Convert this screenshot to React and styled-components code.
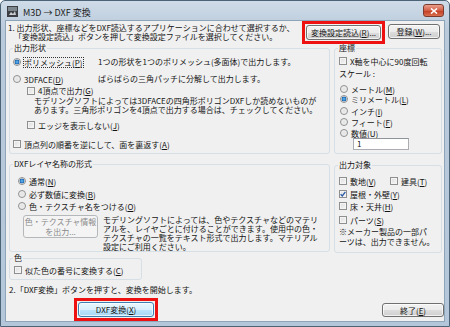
import styled, { createGlobalStyle } from 'styled-components';

const GlobalStyle = createGlobalStyle`
  html, body {
    margin: 0;
    padding: 0;
    background: #ffffff;
  }
  body {
    font-family: 'Noto Sans CJK JP', 'Noto Sans', sans-serif;
    font-size: 8px;
    color: #141414;
  }
`;

const Window = styled.div`
  width: 450px;
  height: 327px;
  box-sizing: border-box;
  display: flex;
  flex-direction: column;
  background: linear-gradient(#cfdbe8, #b9cadb 30px, #b4c7da);
  border: 1px solid #4d6477;
  border-radius: 5px 5px 0 0;
  padding: 0 4px 4px 4px;
`;

const TitleBar = styled.div`
  height: 19px;
  display: flex;
  align-items: flex-start;
  gap: 5px;
  padding-left: 2px;
`;

const TitleText = styled.span`
  flex: 1;
  font-size: 9px;
  line-height: 10px;
  margin-top: 7px;
  color: #1c1c1c;
`;

const CloseButton = styled.div`
  width: 19px;
  height: 11px;
  margin-top: 3px;
  margin-right: 1px;
  border: 1px solid #7d3a2e;
  border-radius: 3px;
  background: linear-gradient(#eaa08e, #d25d45 50%, #c03a22 51%, #d9704f);
  display: flex;
  align-items: center;
  justify-content: center;
`;

const Client = styled.div`
  flex: 1;
  background: #f0f0f0;
  border: 1px solid #8ea4b8;
  display: flex;
  flex-direction: column;
  padding: 0 4px 0 2px;
`;

const Header = styled.div`
  display: flex;
  align-items: flex-start;
  height: 22px;
`;

const Intro = styled.div`
  flex: 1;
  line-height: 9px;
  padding: 2px 0 0 0;
  white-space: nowrap;
`;

const Indent = styled.span`
  padding-left: ${(p) => p.$w}px;
`;

const RedFrame = styled.div`
  border: 3px solid #ee1111;
  padding: 1px 1px;
  margin-left: ${(p) => p.$ml || 0}px;
  margin-top: ${(p) => p.$mt || 0}px;
  display: flex;
`;

const Button = styled.div`
  box-sizing: border-box;
  width: ${(p) => p.$w}px;
  height: ${(p) => p.$h || 15}px;
  margin-left: ${(p) => p.$ml || 0}px;
  margin-top: ${(p) => p.$mt || 0}px;
  border: 1px solid ${(p) => (p.$primary ? '#3c7fb1' : p.$disabled ? '#b5b8ba' : '#707070')};
  border-radius: 3px;
  background: ${(p) =>
    p.$primary
      ? 'linear-gradient(#eaf6fd, #d9f0fc 50%, #bee6fd 51%, #a7d9f5)'
      : p.$disabled
      ? '#f4f4f4'
      : 'linear-gradient(#f2f2f2, #ebebeb 50%, #dddddd 51%, #cfcfcf)'};
  box-shadow: inset 0 0 0 1px ${(p) => (p.$disabled ? 'transparent' : 'rgba(255,255,255,0.7)')};
  color: ${(p) => (p.$disabled ? '#8a8a8a' : '#141414')};
  display: flex;
  align-items: center;
  justify-content: center;
  text-align: center;
  line-height: ${(p) => (p.$disabled ? 10 : 9)}px;
  white-space: nowrap;
  flex-shrink: 0;
`;

const Main = styled.div`
  display: grid;
  grid-template-columns: 321px 108px;
  column-gap: 4px;
  padding-left: 1px;
`;

const Column = styled.div`
  display: flex;
  flex-direction: column;
  align-items: flex-start;
`;

const Group = styled.fieldset`
  box-sizing: border-box;
  margin: ${(p) => p.$mt || 0}px 0 0 0;
  width: ${(p) => p.$w}px;
  height: ${(p) => p.$h}px;
  border: 1px solid #d5dfe5;
  border-radius: 3px;
  padding: 0 0 0 3px;
  min-width: 0;
  display: flex;
  flex-direction: column;
`;

const Legend = styled.legend`
  padding: 0 1px;
  line-height: 10px;
  font-size: 8px;
`;

const Row = styled.div`
  display: flex;
  align-items: center;
  height: ${(p) => p.$h || 10}px;
  line-height: 10px;
  margin-top: ${(p) => p.$mt || 0}px;
  margin-left: ${(p) => p.$ml || 0}px;
  white-space: nowrap;
`;

const Option = styled.div`
  display: flex;
  align-items: center;
  gap: 3px;
  width: ${(p) => (p.$w ? `${p.$w}px` : 'auto')};
  flex-shrink: 0;
`;

const Label = styled.span`
  outline: ${(p) => (p.$focus ? '1px dotted #333' : 'none')};
  outline-offset: 0;
  line-height: 9px;
`;

const Radio = styled.span`
  box-sizing: border-box;
  width: 8px;
  height: 8px;
  border-radius: 50%;
  border: 1px solid #8e8f8f;
  background: ${(p) =>
    p.$on
      ? 'radial-gradient(circle, #6fc1f5 0, #2e7fc8 1.6px, #1f5ea8 2.4px, #e9e9e9 2.6px, #f7f7f7 4px)'
      : 'radial-gradient(circle, #e2e2e2 0, #f4f4f4 4px)'};
  flex-shrink: 0;
`;

const Box = styled.span`
  box-sizing: border-box;
  width: 8px;
  height: 8px;
  border: 1px solid #8e8f8f;
  background: linear-gradient(135deg, #dcdcdc, #f8f8f8);
  box-shadow: inset 0 0 0 1px #f4f4f4;
  display: flex;
  align-items: center;
  justify-content: center;
  flex-shrink: 0;
`;

const Desc = styled.div`
  line-height: ${(p) => p.$lh || 9}px;
  margin-top: ${(p) => p.$mt || 0}px;
  margin-left: ${(p) => p.$ml || 0}px;
  white-space: nowrap;
`;

const Split = styled.div`
  display: flex;
  align-items: flex-start;
  margin-top: ${(p) => p.$mt || 0}px;
  margin-left: ${(p) => p.$ml || 0}px;
`;

const NumberInput = styled.div`
  box-sizing: border-box;
  width: 56px;
  height: 12px;
  margin-left: 15px;
  border: 1px solid #abadb3;
  border-top-color: #8f939b;
  background: #ffffff;
  line-height: 10px;
  padding-left: 3px;
`;

const Step = styled.div`
  margin-top: 5px;
  line-height: 10px;
  padding-left: 1px;
  white-space: nowrap;
`;

const Footer = styled.div`
  display: flex;
  align-items: flex-start;
  margin-top: 3px;
`;

const Check = () => (
  <svg width="6" height="6" viewBox="0 0 6 6">
    <path d="M0.6 3.2 L2.3 4.9 L5.4 0.9" fill="none" stroke="#2a5aa8" strokeWidth="1.3" />
  </svg>
);

const AppIcon = () => (
  <svg width="11" height="11" viewBox="0 0 11 11" style={{ marginTop: 5 }}>
    <rect x="0" y="0" width="11" height="11" fill="#3b3f44" />
    <rect x="1" y="1" width="9" height="4" fill="#7d858d" />
    <path d="M2 9 L4 6 L6 8 L8 5 L9 9 Z" fill="#c9cfd4" />
  </svg>
);

const CheckBox = ({ on }) => <Box>{on && <Check />}</Box>;

const App = () => {
  return (
    <>
      <GlobalStyle />
      <Window>
        <TitleBar>
          <AppIcon />
          <TitleText>M3D → DXF 変換</TitleText>
          <CloseButton>
            <svg width="8" height="6" viewBox="0 0 8 6">
              <path d="M1 0.5 L7 5.5 M7 0.5 L1 5.5" stroke="#ffffff" strokeWidth="1.6" />
            </svg>
          </CloseButton>
        </TitleBar>
        <Client>
          <Header>
            <Intro>
              1. 出力形状、座標などをDXF読込するアプリケーションに合わせて選択するか、
              <br />
              <Indent $w={6}>「変換設定読込」ボタンを押して変換設定ファイルを選択してください。</Indent>
            </Intro>
            <RedFrame>
              <Button $w={75}>変換設定読込(<u>R</u>)...</Button>
            </RedFrame>
            <Button $w={52} $ml={3} $mt={3}>
              登録(<u>W</u>)...
            </Button>
          </Header>

          <Main>
            <Column>
              <Group $w={321} $h={111}>
                <Legend>出力形状</Legend>
                <Row $mt={4} $ml={0}>
                  <Option $w={85}>
                    <Radio $on />
                    <Label $focus>ポリメッシュ(<u>P</u>)</Label>
                  </Option>
                  1つの形状を1つのポリメッシュ(多面体)で出力します。
                </Row>
                <Row $mt={7}>
                  <Option $w={85}>
                    <Radio />
                    <Label>3DFACE(<u>D</u>)</Label>
                  </Option>
                  ばらばらの三角パッチに分解して出力します。
                </Row>
                <Row $mt={2} $ml={14} $h={9}>
                  <Option>
                    <CheckBox />
                    <Label>4頂点で出力(<u>G</u>)</Label>
                  </Option>
                </Row>
                <Desc $ml={21} $mt={1}>
                  モデリングソフトによっては3DFACEの四角形ポリゴンDXFしか読めないものが
                  <br />
                  あります。三角形ポリゴンを4頂点で出力する場合は、チェックしてください。
                </Desc>
                <Row $mt={6} $ml={14}>
                  <Option>
                    <CheckBox />
                    <Label>エッジを表示しない(<u>J</u>)</Label>
                  </Option>
                </Row>
                <Row $mt={9} $ml={0}>
                  <Option>
                    <CheckBox />
                    <Label>頂点列の順番を逆にして、面を裏返す(<u>A</u>)</Label>
                  </Option>
                </Row>
              </Group>

              <Group $w={321} $h={93} $mt={5}>
                <Legend>DXFレイヤ名称の形式</Legend>
                <Row $mt={7} $ml={5}>
                  <Option>
                    <Radio $on />
                    <Label>通常(<u>N</u>)</Label>
                  </Option>
                </Row>
                <Row $mt={3} $ml={5}>
                  <Option>
                    <Radio />
                    <Label>必ず数値に変換(<u>B</u>)</Label>
                  </Option>
                </Row>
                <Row $mt={2} $ml={5}>
                  <Option>
                    <Radio />
                    <Label>色・テクスチャ名をつける(<u>O</u>)</Label>
                  </Option>
                </Row>
                <Split $mt={4} $ml={10}>
                  <Button $w={75} $h={23} $disabled>
                    色・テクスチャ情報
                    <br />
                    を出力...
                  </Button>
                  <Desc $ml={5} $mt={0}>
                    モデリングソフトによっては、色やテクスチャなどのマテリ
                    <br />
                    アルを、レイヤごとに付けることができます。使用中の色・
                    <br />
                    テクスチャの一覧をテキスト形式で出力します。マテリアル
                    <br />
                    設定にご利用ください。
                  </Desc>
                </Split>
              </Group>

              <Group $w={133} $h={27} $mt={1}>
                <Legend>色</Legend>
                <Row $mt={2} $ml={1}>
                  <Option>
                    <CheckBox />
                    <Label>似た色の番号に変換する(<u>C</u>)</Label>
                  </Option>
                </Row>
              </Group>
            </Column>

            <Column>
              <Group $w={108} $h={111}>
                <Legend>座標</Legend>
                <Row $mt={3} $ml={1}>
                  <Option>
                    <CheckBox />
                    <Label>X軸を中心に90度回転</Label>
                  </Option>
                </Row>
                <Row $mt={3} $ml={1}>
                  スケール :
                </Row>
                <Row $mt={5} $ml={2}>
                  <Option>
                    <Radio />
                    <Label>メートル(<u>M</u>)</Label>
                  </Option>
                </Row>
                <Row $mt={0} $ml={2}>
                  <Option>
                    <Radio $on />
                    <Label>ミリメートル(<u>L</u>)</Label>
                  </Option>
                </Row>
                <Row $mt={2} $ml={2}>
                  <Option>
                    <Radio />
                    <Label>インチ(<u>I</u>)</Label>
                  </Option>
                </Row>
                <Row $mt={1} $ml={2}>
                  <Option>
                    <Radio />
                    <Label>フィート(<u>F</u>)</Label>
                  </Option>
                </Row>
                <Row $mt={1} $ml={2}>
                  <Option>
                    <Radio />
                    <Label>数値(<u>U</u>)</Label>
                  </Option>
                </Row>
                <Row $mt={0} $h={12}>
                  <NumberInput>1</NumberInput>
                </Row>
              </Group>

              <Group $w={108} $h={93} $mt={6}>
                <Legend>出力対象</Legend>
                <Row $mt={6} $ml={1}>
                  <Option $w={51}>
                    <CheckBox />
                    <Label>敷地(<u>V</u>)</Label>
                  </Option>
                  <Option>
                    <CheckBox />
                    <Label>建具(<u>T</u>)</Label>
                  </Option>
                </Row>
                <Row $mt={3} $ml={1}>
                  <Option>
                    <CheckBox on />
                    <Label>屋根・外壁(<u>Y</u>)</Label>
                  </Option>
                </Row>
                <Row $mt={2} $ml={1}>
                  <Option>
                    <CheckBox />
                    <Label>床・天井(<u>H</u>)</Label>
                  </Option>
                </Row>
                <Row $mt={4} $ml={1}>
                  <Option>
                    <CheckBox />
                    <Label>パーツ(<u>S</u>)</Label>
                  </Option>
                </Row>
                <Desc $ml={1} $mt={2} $lh={10}>
                  ※メーカー製品の一部パ
                  <br />
                  ーツは、出力できません。
                </Desc>
              </Group>
            </Column>
          </Main>

          <Step>2.「DXF変換」ボタンを押すと、変換を開始します。</Step>

          <Footer>
            <RedFrame $ml={66} $mt={0}>
              <Button $w={76} $h={15} $primary>
                DXF変換(<u>X</u>)
              </Button>
            </RedFrame>
            <Button $w={62} $h={14} $ml={224} $mt={5}>
              終了(<u>E</u>)
            </Button>
          </Footer>
        </Client>
      </Window>
    </>
  );
};

export default App;
